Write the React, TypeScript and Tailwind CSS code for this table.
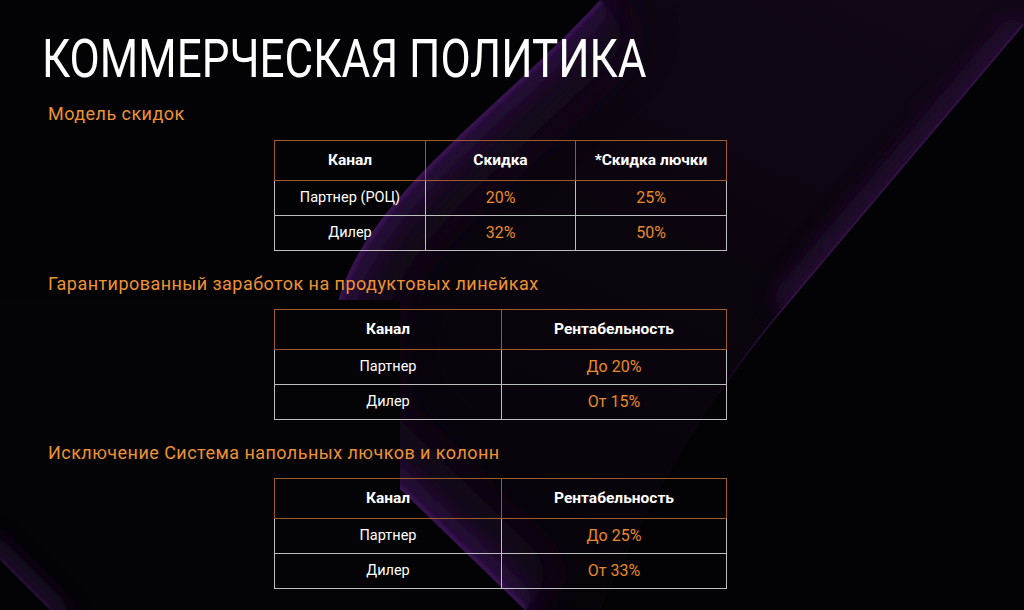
import React from "react";

const ORANGE = "text-[#ee9233]";

function Background() {
  const ribbon =
    "M600,0 C500,110 360,200 336,310 C328,370 338,420 365,455 L525,610 L600,610 Q680,430 783,310 Q850,230 1024,25 L1024,0 Z";
  const leftEdge =
    "M600,0 C500,110 360,200 336,310 C328,370 338,420 365,455 L525,610";
  return (
    <svg
      className="absolute inset-0 w-full h-full"
      viewBox="0 0 1024 610"
      preserveAspectRatio="none"
    >
      <defs>
        <clipPath id="ribbon">
          <path d={ribbon} />
        </clipPath>
        <clipPath id="wedge">
          <path d="M0,560 L50,610 L400,610 L400,300 L0,300 Z" />
        </clipPath>
        <linearGradient id="ribFill" x1="1" y1="0" x2="0.3" y2="1">
          <stop offset="0" stopColor="#120717" />
          <stop offset="0.45" stopColor="#0b050e" />
          <stop offset="1" stopColor="#060308" />
        </linearGradient>
        <filter id="blurW" x="-50%" y="-50%" width="200%" height="200%">
          <feGaussianBlur stdDeviation="24" />
        </filter>
        <filter id="blurA" x="-50%" y="-50%" width="200%" height="200%">
          <feGaussianBlur stdDeviation="10" />
        </filter>
        <filter id="blurB" x="-50%" y="-50%" width="200%" height="200%">
          <feGaussianBlur stdDeviation="2" />
        </filter>
        <filter id="blurC" x="-50%" y="-50%" width="200%" height="200%">
          <feGaussianBlur stdDeviation="1.2" />
        </filter>
      </defs>
      <rect x="0" y="0" width="1024" height="610" fill="#030204" />
      <g clipPath="url(#ribbon)">
        <rect x="0" y="0" width="1024" height="610" fill="url(#ribFill)" />
        <path
          d={leftEdge}
          fill="none"
          stroke="#1a0826"
          strokeWidth="100"
          filter="url(#blurW)"
          opacity="0.8"
        />
        <path
          d={leftEdge}
          fill="none"
          stroke="#2c1040"
          strokeWidth="34"
          filter="url(#blurA)"
          opacity="0.85"
        />
        <path
          d={leftEdge}
          fill="none"
          stroke="#3e1656"
          strokeWidth="8"
          filter="url(#blurB)"
          opacity="0.8"
        />
        <path
          d="M1024,25 Q850,230 783,310"
          fill="none"
          stroke="#250c34"
          strokeWidth="36"
          filter="url(#blurA)"
          opacity="0.8"
        />
        <path
          d="M1024,25 Q850,230 783,310 Q750,350 720,395"
          fill="none"
          stroke="#4a1a66"
          strokeWidth="3"
          filter="url(#blurC)"
          opacity="0.7"
        />
      </g>
      <g clipPath="url(#wedge)">
        <rect x="0" y="300" width="400" height="310" fill="#040305" />
        <path
          d="M-20,545 L60,625"
          fill="none"
          stroke="#1f0b2c"
          strokeWidth="40"
          filter="url(#blurA)"
          opacity="0.9"
        />
        <path
          d="M0,560 L50,610"
          fill="none"
          stroke="#3a1452"
          strokeWidth="3"
          filter="url(#blurB)"
          opacity="0.7"
        />
      </g>
    </svg>
  );
}

type Row = string[];

function DataTable({
  widths,
  header,
  rows,
}: {
  widths: number[];
  header: Row;
  rows: Row[];
}) {
  return (
    <table className="border-collapse ml-[226px] w-[452px] table-fixed">
      <colgroup>
        {widths.map((w, i) => (
          <col key={i} style={{ width: w }} />
        ))}
      </colgroup>
      <thead>
        <tr className="h-[40px]">
          {header.map((h, i) => (
            <th
              key={i}
              className="border border-[#9d5a2b] text-white font-bold text-[15.5px] text-center p-0"
            >
              {h}
            </th>
          ))}
        </tr>
      </thead>
      <tbody>
        {rows.map((r, ri) => (
          <tr key={ri} className="h-[35px]">
            {r.map((c, ci) => (
              <td
                key={ci}
                className={`border border-[#bdbdbd] text-center p-0 ${
                  ci === 0
                    ? "text-white text-[14.5px]"
                    : "text-[#e98a2a] text-[16px]"
                }`}
              >
                {c}
              </td>
            ))}
          </tr>
        ))}
      </tbody>
    </table>
  );
}

export default function App() {
  return (
    <div
      className="relative w-[1024px] h-[610px] overflow-hidden bg-[#030204]"
      style={{ fontFamily: "Roboto, 'Noto Sans', sans-serif" }}
    >
      <Background />
      <div className="relative flex flex-col pl-[48px]">
        <h1 className="mt-[28px] -ml-[6px] h-[62px] leading-[62px] text-[53px] font-normal text-white whitespace-nowrap">
          <span className="inline-block origin-left scale-x-[0.83]">
            КОММЕРЧЕСКАЯ ПОЛИТИКА
          </span>
        </h1>
        <div
          className={`mt-[14px] h-[20px] leading-[20px] text-[18px] tracking-[0.45px] ${ORANGE}`}
        >
          Модель скидок
        </div>
        <div className="mt-[16px]">
          <DataTable
            widths={[151, 150, 151]}
            header={["Канал", "Скидка", "*Скидка лючки"]}
            rows={[
              ["Партнер (РОЦ)", "20%", "25%"],
              ["Дилер", "32%", "50%"],
            ]}
          />
        </div>
        <div
          className={`mt-[23px] h-[20px] leading-[20px] text-[18px] tracking-[0.45px] ${ORANGE}`}
        >
          Гарантированный заработок на продуктовых линейках
        </div>
        <div className="mt-[15px]">
          <DataTable
            widths={[227, 225]}
            header={["Канал", "Рентабельность"]}
            rows={[
              ["Партнер", "До 20%"],
              ["Дилер", "От 15%"],
            ]}
          />
        </div>
        <div
          className={`mt-[23px] h-[20px] leading-[20px] text-[18px] tracking-[0.45px] ${ORANGE}`}
        >
          Исключение Система напольных лючков и колонн
        </div>
        <div className="mt-[15px]">
          <DataTable
            widths={[227, 225]}
            header={["Канал", "Рентабельность"]}
            rows={[
              ["Партнер", "До 25%"],
              ["Дилер", "От 33%"],
            ]}
          />
        </div>
      </div>
    </div>
  );
}
